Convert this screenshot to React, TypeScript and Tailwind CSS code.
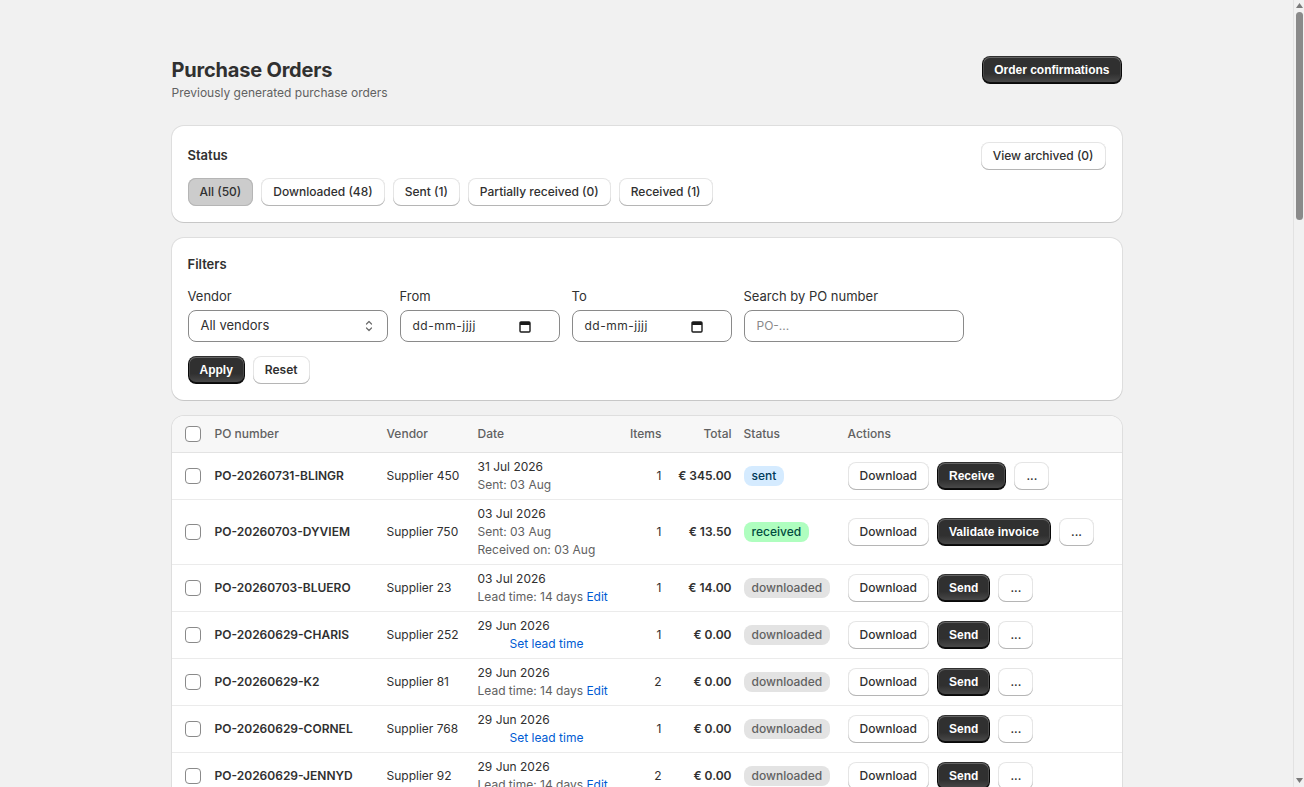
import React from "react";

type Row = {
  po: string;
  vendor: string;
  date: string;
  sub?: string[];
  lead?: "edit" | "set";
  items: number;
  total: string;
  status: "sent" | "received" | "downloaded";
  action: string;
};

const baseRows: Row[] = [
  { po: "PO-20260731-BLINGR", vendor: "Supplier 450", date: "31 Jul 2026", sub: ["Sent: 03 Aug"], items: 1, total: "€ 345.00", status: "sent", action: "Receive" },
  { po: "PO-20260703-DYVIEM", vendor: "Supplier 750", date: "03 Jul 2026", sub: ["Sent: 03 Aug", "Received on: 03 Aug"], items: 1, total: "€ 13.50", status: "received", action: "Validate invoice" },
  { po: "PO-20260703-BLUERO", vendor: "Supplier 23", date: "03 Jul 2026", lead: "edit", items: 1, total: "€ 14.00", status: "downloaded", action: "Send" },
  { po: "PO-20260629-CHARIS", vendor: "Supplier 252", date: "29 Jun 2026", lead: "set", items: 1, total: "€ 0.00", status: "downloaded", action: "Send" },
  { po: "PO-20260629-K2", vendor: "Supplier 81", date: "29 Jun 2026", lead: "edit", items: 2, total: "€ 0.00", status: "downloaded", action: "Send" },
  { po: "PO-20260629-CORNEL", vendor: "Supplier 768", date: "29 Jun 2026", lead: "set", items: 1, total: "€ 0.00", status: "downloaded", action: "Send" },
  { po: "PO-20260629-JENNYD", vendor: "Supplier 92", date: "29 Jun 2026", lead: "edit", items: 2, total: "€ 0.00", status: "downloaded", action: "Send" },
];

const codes = ["MARKUS", "ANNAB", "PETROV", "LUCIAS", "TOMAS", "HELGAS", "NORDIC", "BRAVO", "OSCARL", "VIKTOR", "SOFIAM", "DELTAX"];
const days = ["28 Jun 2026", "27 Jun 2026", "26 Jun 2026", "25 Jun 2026", "24 Jun 2026", "23 Jun 2026", "22 Jun 2026"];
const dayCodes = ["20260628", "20260627", "20260626", "20260625", "20260624", "20260623", "20260622"];

const extraRows: Row[] = Array.from({ length: 43 }, (_, i) => {
  const d = Math.floor(i / 7);
  return {
    po: `PO-${dayCodes[d]}-${codes[i % codes.length]}`,
    vendor: `Supplier ${(i * 37 + 14) % 900 + 10}`,
    date: days[d],
    lead: i % 2 === 0 ? "set" : "edit",
    items: (i % 3) + 1,
    total: "€ 0.00",
    status: "downloaded",
    action: "Send",
  } as Row;
});

const rows: Row[] = [...baseRows, ...extraRows];

const whiteBtn =
  "inline-flex items-center justify-center h-7 px-3 rounded-lg bg-white text-[12px] font-medium text-[#303030] shadow-[inset_0_-1px_0_0_#b5b5b5,inset_0_0_0_1px_rgba(0,0,0,0.1)] whitespace-nowrap";
const darkBtn =
  "inline-flex items-center justify-center h-7 px-3 rounded-lg text-[12px] font-bold text-white bg-[#303030] bg-[linear-gradient(180deg,rgba(48,48,48,0)_63%,rgba(255,255,255,0.15))] shadow-[inset_0_-1px_0_1px_rgba(0,0,0,0.8),inset_0_0_0_1px_#303030,inset_0_0.5px_0_1.5px_rgba(255,255,255,0.25)] [font-family:'Liberation_Sans',Arial,sans-serif] whitespace-nowrap";
const card =
  "bg-white rounded-xl shadow-[0_0_0_1px_rgba(0,0,0,0.08),0_1px_0_rgba(0,0,0,0.1)]";

function Checkbox() {
  return <div className="w-4 h-4 rounded-[4px] border border-[#8a8a8a] bg-white" />;
}

function CalendarIcon() {
  return (
    <svg width="12" height="13" viewBox="0 0 12 13" className="text-[#1a1a1a]">
      <rect x="1" y="2" width="10" height="10" rx="1" fill="none" stroke="currentColor" strokeWidth="1.4" />
      <rect x="1" y="2" width="10" height="3" fill="currentColor" />
    </svg>
  );
}

function DateInput() {
  return (
    <div className="w-[160px] h-8 rounded-lg border border-[#8a8a8a] bg-white flex items-center justify-between pl-3 pr-[28px]">
      <span className="text-[12px] text-[#303030] tracking-[0.5px]">dd-mm-jjjj</span>
      <CalendarIcon />
    </div>
  );
}

function Badge({ status }: { status: Row["status"] }) {
  const cls =
    status === "sent"
      ? "bg-[#d5ebff] text-[#003a5a]"
      : status === "received"
      ? "bg-[#affebf] text-[#014b40]"
      : "bg-[#e3e3e3] text-[#616161]";
  return <span className={`inline-flex items-center h-5 px-2 rounded-lg text-[12px] font-medium ${cls}`}>{status}</span>;
}

function Scrollbar() {
  return (
    <div className="fixed top-0 right-0 h-screen w-[11px] bg-[#f1f1f1] border-l border-[#e2e2e2]">
      <svg width="7" height="5" viewBox="0 0 7 5" className="absolute left-[2px] top-[3px]">
        <path d="M3.5 0 7 5H0z" fill="#7a7a7a" />
      </svg>
      <div className="absolute left-[2px] top-[12px] w-[7px] h-[208px] rounded-full bg-[#8a8a8a]" />
      <svg width="7" height="5" viewBox="0 0 7 5" className="absolute left-[2px] bottom-[4px]">
        <path d="M0 0h7L3.5 5z" fill="#7a7a7a" />
      </svg>
    </div>
  );
}

export default function App() {
  return (
    <div className="min-h-screen bg-[#f1f1f1] pr-[11px] text-[#303030] [font-family:Inter,'Noto_Sans',sans-serif]">
      <div className="max-w-[998px] mx-auto px-6 pt-[56px] pb-[60px]">
        <div className="flex items-start justify-between">
          <div>
            <h1 className="text-[20px] leading-[28px] font-bold tracking-[-0.2px]">Purchase Orders</h1>
            <p className="text-[12px] leading-[18px] text-[#616161]">Previously generated purchase orders</p>
          </div>
          <button className={darkBtn}>Order confirmations</button>
        </div>

        <div className={`mt-6 p-4 ${card}`}>
          <div className="flex items-center justify-between">
            <h2 className="text-[13px] font-semibold">Status</h2>
            <button className={whiteBtn}>View archived (0)</button>
          </div>
          <div className="mt-2 flex gap-2">
            <button className="inline-flex items-center h-7 px-3 rounded-lg bg-[#cccccc] text-[12px] font-medium text-[#303030] shadow-[inset_0_0_0_1px_#b5b5b5]">All (50)</button>
            <button className={whiteBtn}>Downloaded (48)</button>
            <button className={whiteBtn}>Sent (1)</button>
            <button className={whiteBtn}>Partially received (0)</button>
            <button className={whiteBtn}>Received (1)</button>
          </div>
        </div>

        <div className={`mt-4 p-4 ${card}`}>
          <h2 className="text-[13px] leading-5 font-semibold">Filters</h2>
          <div className="mt-3 flex gap-3">
            <div className="flex flex-col gap-1">
              <label className="text-[13px] leading-5">Vendor</label>
              <div className="w-[200px] h-8 rounded-lg border border-[#8a8a8a] bg-white flex items-center justify-between pl-3 pr-[12px]">
                <span className="text-[13px]">All vendors</span>
                <svg width="12" height="14" viewBox="0 0 12 14" fill="none" stroke="#6b6b6b" strokeWidth="1.2" strokeLinecap="round" strokeLinejoin="round">
                  <path d="M3.5 5 6 2.5 8.5 5" />
                  <path d="M3.5 9 6 11.5 8.5 9" />
                </svg>
              </div>
            </div>
            <div className="flex flex-col gap-1">
              <label className="text-[13px] leading-5">From</label>
              <DateInput />
            </div>
            <div className="flex flex-col gap-1">
              <label className="text-[13px] leading-5">To</label>
              <DateInput />
            </div>
            <div className="flex flex-col gap-1">
              <label className="text-[13px] leading-5">Search by PO number</label>
              <div className="w-[220px] h-8 rounded-lg border border-[#8a8a8a] bg-white flex items-center pl-3">
                <span className="text-[12px] text-[#8a8a8a]">PO-...</span>
              </div>
            </div>
          </div>
          <div className="mt-[14px] flex gap-2">
            <button className={darkBtn}>Apply</button>
            <button className={whiteBtn + " font-semibold"}>Reset</button>
          </div>
        </div>

        <div className={`mt-4 overflow-hidden ${card}`}>
          <table className="w-full table-fixed border-collapse text-[12px] leading-[18px]">
            <colgroup>
              <col className="w-[37px]" />
              <col className="w-[172px]" />
              <col className="w-[91px]" />
              <col className="w-[150px]" />
              <col className="w-[46px]" />
              <col className="w-[70px]" />
              <col className="w-[104px]" />
              <col />
            </colgroup>
            <thead>
              <tr className="bg-[#f7f7f7] border-b border-[#e3e3e3] h-[36px] text-[#616161]">
                <th className="pl-[13px] pr-2 align-middle"><Checkbox /></th>
                <th className="px-[6px] text-left font-medium">PO number</th>
                <th className="px-[6px] text-left font-medium">Vendor</th>
                <th className="px-[6px] text-left font-medium">Date</th>
                <th className="px-[6px] text-right font-medium">Items</th>
                <th className="px-[6px] text-right font-medium">Total</th>
                <th className="px-[6px] text-left font-medium">Status</th>
                <th className="px-[6px] text-left font-medium">Actions</th>
              </tr>
            </thead>
            <tbody>
              {rows.map((r) => (
                <tr key={r.po} className="border-b border-[#ebebeb]">
                  <td className="pl-[13px] pr-2 py-[5px] align-middle"><Checkbox /></td>
                  <td className="px-[6px] py-[5px] font-semibold whitespace-nowrap">{r.po}</td>
                  <td className="px-[6px] py-[5px] whitespace-nowrap">{r.vendor}</td>
                  <td className="px-[6px] py-[5px] whitespace-nowrap">
                    <div>{r.date}</div>
                    {r.sub?.map((s) => (
                      <div key={s} className="text-[#616161]">{s}</div>
                    ))}
                    {r.lead === "edit" && (
                      <div className="text-[#616161]">
                        Lead time: 14 days <span className="text-[#005bd3]">Edit</span>
                      </div>
                    )}
                    {r.lead === "set" && <div className="text-center text-[#005bd3]">Set lead time</div>}
                  </td>
                  <td className="px-[6px] py-[5px] text-right">{r.items}</td>
                  <td className="px-[6px] py-[5px] text-right font-semibold whitespace-nowrap">{r.total}</td>
                  <td className="px-[6px] py-[5px]"><Badge status={r.status} /></td>
                  <td className="px-[6px] py-[5px]">
                    <div className="flex gap-2">
                      <button className={whiteBtn}>Download</button>
                      <button className={darkBtn}>{r.action}</button>
                      <button className={whiteBtn + " w-[35px] px-0"}>...</button>
                    </div>
                  </td>
                </tr>
              ))}
            </tbody>
          </table>
        </div>
      </div>
      <Scrollbar />
    </div>
  );
}
